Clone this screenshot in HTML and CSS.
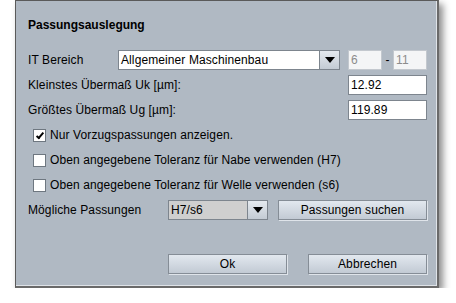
FILE: index.html
```html
<!DOCTYPE html>
<html lang="de">
<head>
    <meta charset="UTF-8">
    <title>Passungsauslegung</title>
    <link rel="stylesheet" href="styles.css">
</head>
<body>
    <div class="dialog">
        <h2 class="title">Passungsauslegung</h2>

        <div class="row">
            <span class="label it-label">IT Bereich</span>
            <div class="combo it-combo">
                <span class="combo-text">Allgemeiner Maschinenbau</span>
                <span class="combo-arrow"></span>
            </div>
            <input class="field small disabled" type="text" value="6" disabled>
            <span class="dash">-</span>
            <input class="field small disabled" type="text" value="11" disabled>
        </div>

        <div class="row">
            <span class="label">Kleinstes Übermaß Uk [µm]:</span>
            <input class="field wide" type="text" value="12.92">
        </div>

        <div class="row">
            <span class="label">Größtes Übermaß Ug [µm]:</span>
            <input class="field wide" type="text" value="119.89">
        </div>

        <label class="row check-row"><span class="box checked"></span> Nur Vorzugspassungen anzeigen.</label>
        <label class="row check-row"><span class="box"></span> Oben angegebene Toleranz für Nabe verwenden (H7)</label>
        <label class="row check-row"><span class="box"></span> Oben angegebene Toleranz für Welle verwenden (s6)</label>

        <div class="row">
            <span class="label fit-label">Mögliche Passungen</span>
            <div class="combo fit-combo">
                <span class="combo-text">H7/s6</span>
                <span class="combo-arrow"></span>
            </div>
            <button class="btn search-btn">Passungen suchen</button>
        </div>

        <div class="buttons">
            <button class="btn action-btn">Ok</button>
            <button class="btn action-btn">Abbrechen</button>
        </div>
    </div>
</body>
</html>
```

FILE: styles.css
```css
body {
    margin: 0;
    padding: 0;
    background-color: #ffffff;
    font-family: "Liberation Sans", Arial, sans-serif;
    font-size: 12px;
    letter-spacing: 0.1px;
    color: #000;
}

.dialog {
    box-sizing: border-box;
    width: 424px;
    height: 288px;
    margin-left: 15px;
    padding: 16px 10px 0 12px;
    background-color: #b0b9c3;
    border: 1px solid #5a5a5a;
    border-right: 2px solid #6a6a6a;
    border-bottom: 2px solid #6a6a6a;
    box-shadow: inset -1px -1px 0 #dfe3e8, 4px 4px 7px rgba(0, 0, 0, 0.45);
    display: flex;
    flex-direction: column;
}

.title {
    margin: 0 0 17px 0;
    font-size: 12px;
    line-height: 16px;
    font-weight: bold;
    letter-spacing: 0;
}

.row {
    display: flex;
    align-items: center;
    height: 20px;
    margin-bottom: 5px;
}

.label {
    white-space: nowrap;
}

.it-label {
    width: 90px;
}

.fit-label {
    width: 140px;
}

.combo {
    box-sizing: border-box;
    height: 20px;
    display: flex;
    border: 1px solid #7d858e;
    background-color: #fff;
}

.it-combo {
    width: 222px;
}

.fit-combo {
    width: 100px;
    background-color: #cfcfcf;
}

.combo-text {
    flex: 1;
    padding-left: 2px;
    line-height: 18px;
}

.combo-arrow {
    width: 19px;
    border-left: 1px solid #7d858e;
    background: linear-gradient(#e4e9ef, #c3cbd4);
    position: relative;
}

.combo-arrow::after {
    content: "";
    position: absolute;
    left: 5px;
    top: 6px;
    border-left: 5px solid transparent;
    border-right: 5px solid transparent;
    border-top: 6px solid #000;
}

.field {
    box-sizing: border-box;
    height: 20px;
    margin: 0;
    padding: 0 2px;
    font-family: inherit;
    font-size: 12px;
    letter-spacing: 0.1px;
    color: #000;
    background-color: #fff;
    border: 1px solid #7d858e;
    border-radius: 0;
}

.small {
    width: 34px;
    margin-left: 8px;
}

.disabled {
    background-color: #f4f5f6;
    border-color: #c3c8ce;
    color: #8c8c8c;
}

.dash {
    width: 11px;
    text-align: center;
}

.dash + .small {
    margin-left: 0;
}

.wide {
    width: 79px;
    margin-left: auto;
}

.check-row {
    padding-left: 5px;
    gap: 3px;
}

.box {
    box-sizing: border-box;
    width: 13px;
    height: 13px;
    background-color: #fff;
    border: 1px solid #6e7780;
    position: relative;
    margin-right: 1px;
}

.box.checked::after {
    content: "";
    position: absolute;
    left: 4px;
    top: 1px;
    width: 2px;
    height: 6px;
    border-right: 2px solid #000;
    border-bottom: 2px solid #000;
    transform: rotate(40deg);
}

.btn {
    box-sizing: border-box;
    height: 20px;
    margin: 0;
    padding: 0;
    font-family: inherit;
    font-size: 12px;
    letter-spacing: 0.1px;
    color: #000;
    background: linear-gradient(#e2e8ef, #c2cad4);
    border: 1px solid #858d96;
    border-radius: 0;
    box-shadow: 1px 1px 0 #dfe4ea;
}

.search-btn {
    width: 149px;
    margin-left: 10px;
}

.buttons {
    display: flex;
    gap: 21px;
    margin-top: 29px;
    padding-left: 140px;
}

.action-btn {
    width: 119px;
}
```
